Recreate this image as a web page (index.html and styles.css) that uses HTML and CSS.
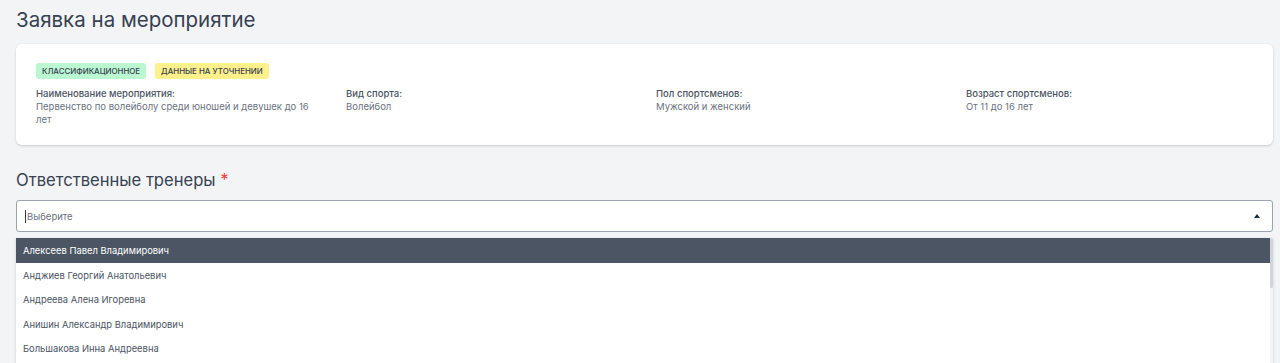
FILE: index.html
```html
<!DOCTYPE html>
<html lang="ru">
<head>
<meta charset="UTF-8">
<title>Заявка на мероприятие</title>
<meta name="viewport" content="width=device-width, initial-scale=1.0">
<link rel="stylesheet" href="styles.css">
</head>
<body>
<h1 class="page-title">Заявка на мероприятие</h1>

<div class="card">
    <div class="badges">
        <span class="badge badge-green">Классификационное</span>
        <span class="badge badge-yellow">Данные на уточнении</span>
    </div>
    <div class="info">
        <div class="info-item">
            <div class="info-label">Наименование мероприятия:</div>
            <div class="info-value">Первенство по волейболу среди юношей и девушек до 16 лет</div>
        </div>
        <div class="info-item">
            <div class="info-label">Вид спорта:</div>
            <div class="info-value">Волейбол</div>
        </div>
        <div class="info-item">
            <div class="info-label">Пол спортсменов:</div>
            <div class="info-value">Мужской и женский</div>
        </div>
        <div class="info-item">
            <div class="info-label">Возраст спортсменов:</div>
            <div class="info-value">От 11 до 16 лет</div>
        </div>
    </div>
</div>

<h2 class="section-title">Ответственные тренеры <span class="req">*</span></h2>

<div class="select">
    <div class="select-box">
        <span class="caret"></span><span class="placeholder">Выберите</span>
        <svg class="arrow" width="6" height="4" viewBox="0 0 6 4"><path d="M0 4 L3 0 L6 4 Z" fill="#1f2a44"/></svg>
    </div>
    <div class="menu">
        <ul class="options">
            <li class="active">Алексеев Павел Владимирович</li>
            <li>Анджиев Георгий Анатольевич</li>
            <li>Андреева Алена Игоревна</li>
            <li>Анишин Александр Владимирович</li>
            <li>Большакова Инна Андреевна</li>
        </ul>
        <div class="scrollbar"><div class="thumb"></div></div>
    </div>
</div>
</body>
</html>
```

FILE: styles.css
```css
body{margin:0;padding:0 7px 0 16px;background:#f3f4f6;font-family:Inter,"Noto Sans",sans-serif;color:#374151;overflow:hidden}
.page-title{margin:0;padding-top:6px;height:38px;font-size:20.5px;font-weight:400;color:#374151;line-height:28px}
.card{background:#fff;border-radius:6px;box-shadow:0 1px 3px rgba(0,0,0,.12),0 1px 2px rgba(0,0,0,.06);padding:19px 20px 24px 20px;height:58px}
.badges{display:flex;gap:9px}
.badge{display:inline-block;padding:0 6px;height:16px;line-height:16px;border-radius:3px;font-size:7.9px;font-weight:500;text-transform:uppercase;color:#374151}
.badge-green{background:#bbf7d0}
.badge-yellow{background:#fef08a}
.info{display:grid;grid-template-columns:repeat(4,1fr);column-gap:23px;margin-top:8px}
.info-label{font-size:9.5px;font-weight:500;color:#4b5563;line-height:13px}
.info-value{font-size:9.5px;color:#6b7280;line-height:13px;padding-right:8px}
.section-title{margin:23px 0 0;font-size:16.6px;font-weight:400;line-height:24px;color:#374151}
.req{color:#ef4444}
.select{margin-top:8px}
.select-box{position:relative;height:30px;background:#fff;border:1px solid #9ca3af;border-radius:3px;display:flex;align-items:center;padding-left:8px}
.caret{width:1px;height:13px;background:#374151;margin-right:1px}
.placeholder{font-size:9.5px;color:#6b7280}
.arrow{position:absolute;right:12px;top:13px}
.menu{display:flex;height:140px;margin-top:6px;background:#fff;box-shadow:0 1px 3px rgba(0,0,0,.15)}
.options{flex:1;list-style:none;margin:0;padding:0}
.options li{height:24.6px;line-height:26px;padding-left:7px;font-size:9.4px;color:#4b5563}
.options li.active{background:#4b5563;color:#fff}
.scrollbar{width:3px;background:#f3f4f6}
.thumb{height:50px;background:#d1d5db;border-radius:2px}
```
